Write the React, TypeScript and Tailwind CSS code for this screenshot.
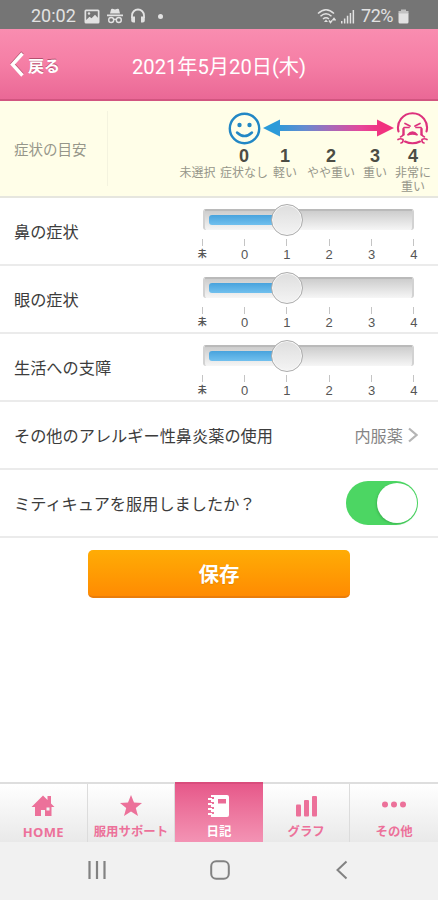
import type { ReactNode } from "react";

const levels = [
  { value: "", label: "未選択" },
  { value: "0", label: "症状なし" },
  { value: "1", label: "軽い" },
  { value: "2", label: "やや重い" },
  { value: "3", label: "重い" },
  { value: "4", label: "非常に\n重い" },
];

const ticks = ["未", "0", "1", "2", "3", "4"];
const symptoms = ["鼻の症状", "眼の症状", "生活への支障"];

const StatusBar = () => (
  <div className="flex h-[29px] shrink-0 items-center bg-[#757575] pt-[3px] pr-[29px] pl-[31px] font-['Roboto',sans-serif] text-[#e2e2e2]">
    <span className="w-[53px] text-[18px] leading-none">20:02</span>
    <svg className="h-[15px] w-[16px]" viewBox="0 0 16 15">
      <path fill="currentColor" fillRule="evenodd" d="M2 .5h12A1.500 1.500 0 0 1 15.500 2v11a1.500 1.500 0 0 1-1.500 1.500H2A1.500 1.500 0 0 1 .5 13V2A1.500 1.500 0 0 1 2 .5ZM2.200 2.200v8.800l3.300-3.300 2 1.600L11 5.700l2.800 3V2.200Z" />
      <circle cx="5" cy="4.500" r="1.200" fill="currentColor" />
    </svg>
    <svg className="ml-[6px] h-[16px] w-[18px]" viewBox="0 0 18 16" fill="currentColor">
      <path d="M5 1.500Q5.400.4 6.500.8L9 1.400 11.500.8Q12.600.4 13 1.500L14 5.500H4ZM1 6.500h16v1.800H1Z" />
      <g fill="none" stroke="currentColor" strokeWidth="1.400">
        <circle cx="5.200" cy="12" r="2.500" />
        <circle cx="12.800" cy="12" r="2.500" />
        <path d="M7.700 11.600q1.300-1 2.600 0" />
      </g>
    </svg>
    <svg className="ml-[6px] h-[16px] w-[16px]" viewBox="0 0 16 16">
      <path d="M2 10V7.500a6 6 0 0 1 12 0V10" fill="none" stroke="currentColor" strokeWidth="1.800" />
      <path fill="currentColor" d="M1.200 8.500h3.800v6H3.200a2 2 0 0 1-2-2ZM14.800 8.500H11v6h1.800a2 2 0 0 0 2-2Z" />
    </svg>
    <span className="ml-[12px] size-[5px] rounded-full bg-current" />
    <div className="ml-auto flex items-center">
      <svg className="h-[17px] w-[20px]" viewBox="0 0 20 17" fill="none" stroke="currentColor" strokeWidth="1.500">
        <path d="M1 5.500q8-7.500 16 0M3.500 8.300q5.500-5 11 0M6 11q3-2.500 6 0" />
        <path d="M9 11.500 11 14H7Z" fill="currentColor" stroke="none" />
        <path d="m12 12.500 1.500 2 1.500-2M15.500 12.500l1.500-2 1.500 2" />
      </svg>
      <svg className="ml-[4px] h-[15px] w-[14px]" viewBox="0 0 14 15" fill="currentColor">
        <path d="M0 12h1.500v2.500H0ZM2.900 9.500h1.500v5H2.900ZM5.800 6.800h1.500v7.700H5.800ZM8.700 4h1.500v10.500H8.700ZM11.600 1h1.500v13.500h-1.500Z" />
      </svg>
      <span className="ml-[6px] text-[18px] leading-none tracking-[-0.5px]">72%</span>
      <svg className="ml-[5px] h-[15px] w-[11px]" viewBox="0 0 11 15">
        <path fill="currentColor" opacity=".7" d="M3 .5h5V2h2.500v3H.5V2H3Z" />
        <path fill="currentColor" d="M.5 4.500h10V13a1.500 1.500 0 0 1-1.500 1.500H2A1.500 1.500 0 0 1 .5 13Z" />
      </svg>
    </div>
  </div>
);

const Header = () => (
  <header className="grid h-[72px] shrink-0 grid-cols-[1fr_auto_1fr] items-center border-b-2 border-[#d25580] bg-linear-to-b from-[#f98db0] via-[#f57ea5] to-[#ea6896] text-white">
    <button className="flex items-center gap-[4px] pl-[10px] text-left">
      <svg className="h-[25px] w-[14px] drop-shadow-[0_-1px_0_#b5506f]" viewBox="0 0 14 25" fill="none" stroke="currentColor" strokeWidth="3.400">
        <path d="M12.500 1.500 2.500 12.500l10 11" />
      </svg>
      <span className="pt-px text-[16px] leading-none font-bold text-shadow-[0_-1px_0_#b5506f]">戻る</span>
    </button>
    <h1 className="pt-[6px] font-['Roboto','Noto_Sans_CJK_JP',sans-serif] text-[20.200px] leading-none">2021年5月20日(木)</h1>
  </header>
);

const HappyFace = () => (
  <svg className="size-[33px]" viewBox="0 0 33 33">
    <g fill="none" stroke="#2287c5" strokeWidth="2.400" strokeLinecap="round">
      <circle cx="16.500" cy="16.500" r="14.700" />
      <path d="M9 20.500q7.500 7 15 0" />
    </g>
    <circle cx="11.500" cy="13" r="2.200" fill="#2287c5" />
    <circle cx="21.500" cy="13" r="2.200" fill="#2287c5" />
  </svg>
);

const CryingFace = () => (
  <svg className="size-[33px]" viewBox="0 0 33 33" fill="none" stroke="#dd327d" strokeWidth="2.100" strokeLinecap="round">
    <path d="M2.500 19.500A14.500 14.500 0 1 1 30.500 19.500M9 29.500q7.500 3.500 15 0" />
    <path d="m9 11.500 5 2.500M24 11.500 19 14M8 15.500h5M20 15.500h5" strokeWidth="1.700" />
    <path d="M11.500 23q5-6 10 0-5-2-10 0Z" fill="#dd327d" strokeWidth="1.400" />
    <path d="M7.500 17v5.500M25.500 17v5.500" strokeWidth="2.400" />
    <path d="M7.500 22.500q-1 1.500-3 2.500M25.500 22.500q1 1.500 3 2.500" strokeWidth="1.600" />
    <path d="M2 27.500q2.500-1.500 5 0 .5 3-2 3.500M31 27.500q-2.500-1.500-5 0-.5 3 2 3.500" strokeWidth="1.700" />
  </svg>
);

const Guide = () => (
  <section className="flex h-[97px] shrink-0 border-b-2 border-[#e6e6df] bg-[#fffee8] text-[#96968a]">
    <div className="my-[10px] flex w-[108px] items-center border-r border-[#f4f3df] pl-[14px]">
      <span className="pt-[2px] text-[14.500px] leading-none">症状の目安</span>
    </div>
    <div className="ml-[69px] flex-1">
      <div className="mt-[10px] flex h-[34px] items-center pl-[51px]">
        <HappyFace />
        <svg className="mx-[2px] h-[18px] w-[131px]" viewBox="0 0 131 18">
          <defs>
            <linearGradient id="scale" x1="0" x2="131" y1="0" y2="0" gradientUnits="userSpaceOnUse">
              <stop offset=".1" stopColor="#2b9bd9" />
              <stop offset=".32" stopColor="#668bd0" />
              <stop offset=".52" stopColor="#a869b8" />
              <stop offset=".75" stopColor="#e6479b" />
              <stop offset=".9" stopColor="#f1327f" />
            </linearGradient>
          </defs>
          <path fill="url(#scale)" d="M0 9 17 .5V6h97V.5L131 9l-17 8.500V12H17v5.500Z" />
        </svg>
        <CryingFace />
      </div>
      <div className="mt-[2px] grid grid-cols-[41px_52px_30px_62px_26px_50px] text-center">
        {levels.map((level) => (
          <div key={level.label}>
            <p className="h-[18px] font-['Liberation_Sans',sans-serif] text-[18px] leading-[18px] font-bold text-[#4c4c44]">{level.value}</p>
            <p className="text-[12px] leading-[14px] whitespace-pre">{level.label}</p>
          </div>
        ))}
      </div>
    </div>
  </section>
);

const Row = ({ label, children }: { label: string; children: ReactNode }) => (
  <div className="flex h-[68px] shrink-0 items-center justify-between border-b-2 border-[#ebebeb] pl-[14px]">
    <span className="text-[16.200px] leading-none text-[#3c3c3c]">{label}</span>
    {children}
  </div>
);

const SymptomSlider = () => (
  <div className="flex h-full w-[248px] flex-col pt-[4px]">
    <div className="ml-[13px] flex h-[34px] w-[211px] items-center">
      <div className="flex h-[21px] w-full items-center rounded-[3px] border-x-2 border-t-2 border-t-[#bababa] border-x-[#d2d2d2] bg-linear-to-b from-[#cdcdcd] to-[#f6f6f6] pl-[4px]">
        <div className="h-[10px] w-[67px] shrink-0 rounded-l-[3px] bg-linear-to-b from-[#48a3dd] to-[#71c0ee]" />
        <div className="-ml-[5px] size-[32px] shrink-0 rounded-full border-[1.500px] border-[#adadad] bg-linear-to-b from-[#dedede] to-[#f4f4f4] shadow-[inset_0_0_0_1px_#f8f8f8]" />
      </div>
    </div>
    <div className="mt-[3px] -ml-[9px] grid w-[254px] grid-cols-6 font-['Liberation_Sans','Noto_Sans_CJK_JP',sans-serif] text-[#555]">
      {ticks.map((tick) => (
        <div key={tick} className="flex flex-col items-center">
          <span className="h-[7px] w-px bg-[#c4c4c4]" />
          <span className={tick === "未" ? "mt-px text-[9px] leading-[14px] font-bold" : "mt-[2px] text-[13px] leading-[14px]"}>{tick}</span>
        </div>
      ))}
    </div>
  </div>
);

const HomeIcon = () => (
  <svg className="h-[22px] w-[24px]" viewBox="0 0 24 22" fill="currentColor">
    <path fillRule="evenodd" d="M12 .5.500 12H4v9h6v-6h4v6h6.500v-9h3L20 8.500V1h-3.500v4ZM15.500 12.500h3v3h-3Z" />
  </svg>
);

const StarIcon = () => (
  <svg className="h-[22px] w-[24px]" viewBox="0 0 24 22" fill="currentColor">
    <path d="m12 0 3 7.500 8 .5-6.200 5 2.200 8-7-4.500L5 21l2.200-8L1 8l8-.5Z" />
  </svg>
);

const DiaryIcon = () => (
  <svg className="h-[22px] w-[24px]" viewBox="0 0 24 22" fill="currentColor">
    <path fillRule="evenodd" d="M4 0h16a2 2 0 0 1 2 2v18a2 2 0 0 1-2 2H4v-3h3v-2H4v-3h3v-2H4V9h3V7H4V4h3V2H4ZM11 4v4.500h8V4Z" />
    <path d="M1 3h4v2H1ZM1 8h4v2H1ZM1 13h4v2H1ZM1 18h4v2H1Z" />
  </svg>
);

const GraphIcon = () => (
  <svg className="h-[22px] w-[24px]" viewBox="0 0 24 22" fill="currentColor">
    <rect x="2" y="9.500" width="5" height="12" rx="1" />
    <rect x="10" y="5" width="5" height="16.500" rx="1" />
    <rect x="18" y="1" width="5" height="20.500" rx="1" />
  </svg>
);

const MoreIcon = () => (
  <svg className="h-[22px] w-[26px]" viewBox="0 0 26 22" fill="currentColor">
    <circle cx="4" cy="9.500" r="3" />
    <circle cx="13" cy="9.500" r="3" />
    <circle cx="22" cy="9.500" r="3" />
  </svg>
);

const tabs = [
  { label: "HOME", icon: <HomeIcon /> },
  { label: "服用サポート", icon: <StarIcon /> },
  { label: "日記", icon: <DiaryIcon />, active: true },
  { label: "グラフ", icon: <GraphIcon /> },
  { label: "その他", icon: <MoreIcon /> },
];

const TabBar = () => (
  <nav className="grid h-[60px] shrink-0 grid-cols-5 border-t-2 border-[#dedede] font-['Open_Sans','Noto_Sans_CJK_JP',sans-serif]">
    {tabs.map((tab) => (
      <div
        key={tab.label}
        className={
          tab.active
            ? "-mt-[2px] flex flex-col items-center border-t-2 border-[#d94c7c] bg-linear-to-b from-[#e6588a] to-[#f393b4] pt-[11px] text-white"
            : "flex flex-col items-center border-r border-[#dcdcdc] bg-linear-to-b from-white to-[#e9e9e9] pt-[11px] text-[#ec719a] last:border-r-0"
        }
      >
        {tab.icon}
        <span className={tab.label === "HOME" ? "mt-[8px] text-[13px] leading-[14px] font-bold tracking-[0.3px]" : "mt-[8px] text-[12.400px] leading-[14px] font-bold whitespace-nowrap"}>{tab.label}</span>
      </div>
    ))}
  </nav>
);

const SystemNav = () => (
  <div className="flex h-[58px] shrink-0 items-center justify-between bg-[#f1f1f1] pr-[86px] pb-[2px] pl-[87px] text-[#828282]">
    <svg className="size-[20px]" viewBox="0 0 20 20" stroke="currentColor" strokeWidth="2.200">
      <path d="M2.500 1v18M10 1v18M17.500 1v18" />
    </svg>
    <svg className="size-[20px]" viewBox="0 0 20 20" fill="none" stroke="currentColor" strokeWidth="2">
      <rect x="1.200" y="1.200" width="17.600" height="17.600" rx="5" />
    </svg>
    <svg className="size-[20px]" viewBox="0 0 20 20" fill="none" stroke="currentColor" strokeWidth="2">
      <path d="M14.500 1.500 5.500 10l9 8.500" />
    </svg>
  </div>
);

export default function App() {
  return (
    <div className="flex h-[900px] w-[438px] flex-col overflow-hidden bg-white font-['Noto_Sans_CJK_JP',sans-serif]">
      <StatusBar />
      <Header />
      <Guide />
      <main className="flex flex-1 flex-col">
        {symptoms.map((symptom) => (
          <Row key={symptom} label={symptom}>
            <SymptomSlider />
          </Row>
        ))}
        <Row label="その他のアレルギー性鼻炎薬の使用">
          <div className="flex items-center gap-[5px] pr-[20px] text-[#858585]">
            <span className="text-[16.200px] leading-none">内服薬</span>
            <svg className="h-[16px] w-[10px]" viewBox="0 0 10 16" fill="none" stroke="#b5b5b5" strokeWidth="2.200">
              <path d="m1 1.500 7.500 6.500L1 14.500" />
            </svg>
          </div>
        </Row>
        <Row label="ミティキュアを服用しましたか？">
          <div className="mr-[20px] flex h-[44px] w-[72px] items-center justify-end rounded-full bg-[#4cd663] p-[1.500px]">
            <div className="size-[40px] rounded-full bg-white shadow-[-1px_1px_2px_#2f9b4280]" />
          </div>
        </Row>
        <button className="mx-auto mt-[12px] h-[48px] w-[262px] rounded-[5px] border-b-2 border-[#e97d0c] bg-linear-to-b from-[#ffac05] to-[#ff8b02] text-[20.500px] leading-none font-bold text-white text-shadow-[0_1px_1px_#c9780080]">
          保存
        </button>
      </main>
      <TabBar />
      <SystemNav />
    </div>
  );
}
